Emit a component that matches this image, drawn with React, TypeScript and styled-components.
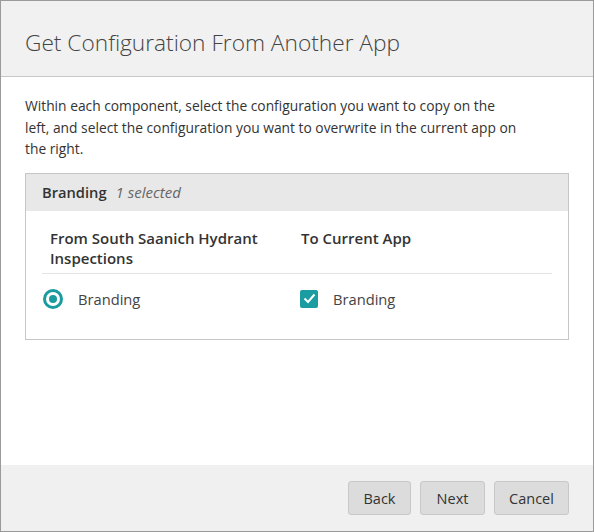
import React from "react";
import styled, { createGlobalStyle } from "styled-components";

const Global = createGlobalStyle`
  html, body { margin: 0; padding: 0; background: #fff; }
  body { font-family: "Open Sans", "Noto Sans", sans-serif; }
  * { box-sizing: border-box; }
`;

const Dialog = styled.div`
  width: 594px;
  height: 532px;
  border: 1px solid #9a9a9a;
  display: flex;
  flex-direction: column;
  background: #fff;
`;

const Header = styled.div`
  height: 76px;
  flex: none;
  background: #f1f1f1;
  border-bottom: 1px solid #c8c8c8;
  display: flex;
  align-items: center;
  padding: 8px 24px 0;
`;

const Title = styled.h1`
  margin: 0;
  font-weight: 300;
  font-size: 22.7px;
  color: #444;
`;

const Body = styled.div`
  flex: 1;
  padding: 18px 24px 0;
`;

const Intro = styled.p`
  margin: 0 0 13px;
  max-width: 496px;
  font-size: 13.8px;
  line-height: 21.5px;
  color: #333;
`;

const Panel = styled.div`
  border: 1px solid #c6c6c6;
  padding-bottom: 30px;
`;

const PanelHeader = styled.div`
  height: 37px;
  background: #e8e8e8;
  display: flex;
  align-items: center;
  padding: 0 16px;
  gap: 9px;
`;

const PanelTitle = styled.span`
  font-size: 14.7px;
  font-weight: 600;
  color: #333;
`;

const PanelMeta = styled.span`
  font-size: 15px;
  font-style: italic;
  color: #666;
`;

const Table = styled.div`
  margin: 0 16px;
`;

const HeadRow = styled.div`
  display: grid;
  grid-template-columns: 251px 1fr;
  padding: 17px 8px 5px;
  border-bottom: 1px solid #e4e4e4;
`;

const ColHead = styled.div`
  font-size: 15px;
  font-weight: 600;
  line-height: 20px;
  color: #333;
  max-width: 235px;
`;

const Row = styled.div`
  display: grid;
  grid-template-columns: 257px 1fr;
  padding: 15px 0 0 1px;
`;

const Option = styled.label`
  display: flex;
  align-items: center;
  gap: 15px;
  font-size: 14.7px;
  color: #444;
  height: 20px;
`;

const Radio = styled.span`
  width: 20px;
  height: 20px;
  border-radius: 50%;
  border: 3px solid #1a9c9f;
  display: flex;
  align-items: center;
  justify-content: center;
  &::after {
    content: "";
    width: 8px;
    height: 8px;
    border-radius: 50%;
    background: #1a9c9f;
  }
`;

const Check = styled.span`
  width: 18px;
  height: 18px;
  border-radius: 2px;
  background: #1a9ca0;
  display: flex;
  align-items: center;
  justify-content: center;
`;

const Footer = styled.div`
  height: 66px;
  flex: none;
  background: #f0f0f0;
  display: flex;
  justify-content: flex-end;
  align-items: center;
  gap: 9px;
  padding: 0 24px 0;
`;

const Button = styled.button<{ $w: number }>`
  width: ${(p) => p.$w}px;
  height: 34px;
  border: 1px solid #c8c8c8;
  border-radius: 3px;
  background: #dcdcdc;
  color: #333;
  font-family: inherit;
  font-size: 14.5px;
  padding: 0;
`;

export default function App() {
  return (
    <>
      <Global />
      <Dialog>
        <Header>
          <Title>Get Configuration From Another App</Title>
        </Header>
        <Body>
          <Intro>
            Within each component, select the configuration you want to copy on the
            left, and select the configuration you want to overwrite in the current app on
            the right.
          </Intro>
          <Panel>
            <PanelHeader>
              <PanelTitle>Branding</PanelTitle>
              <PanelMeta>1 selected</PanelMeta>
            </PanelHeader>
            <Table>
              <HeadRow>
                <ColHead>From South Saanich Hydrant Inspections</ColHead>
                <ColHead>To Current App</ColHead>
              </HeadRow>
              <Row>
                <Option>
                  <Radio />
                  Branding
                </Option>
                <Option>
                  <Check>
                    <svg width="13" height="11" viewBox="0 0 13 11">
                      <path d="M1.5 5.5 L5 9 L11.5 1.5" fill="none" stroke="#fff" strokeWidth="2" />
                    </svg>
                  </Check>
                  Branding
                </Option>
              </Row>
            </Table>
          </Panel>
        </Body>
        <Footer>
          <Button $w={63}>Back</Button>
          <Button $w={65}>Next</Button>
          <Button $w={75}>Cancel</Button>
        </Footer>
      </Dialog>
    </>
  );
}
